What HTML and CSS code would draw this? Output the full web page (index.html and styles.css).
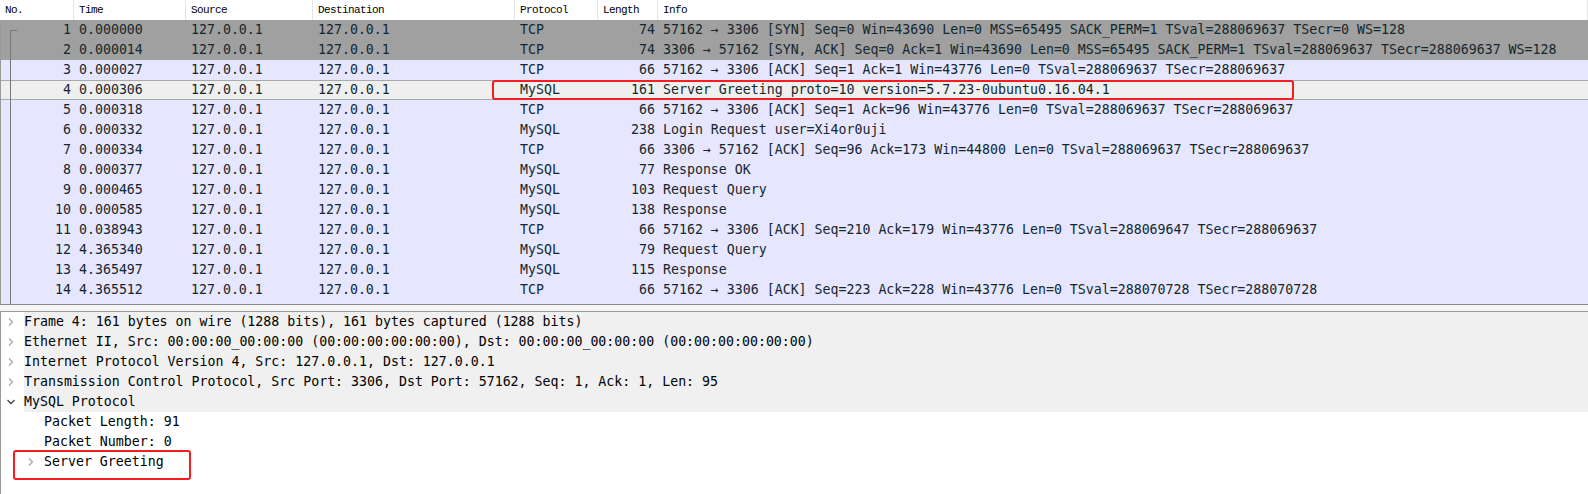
FILE: index.html
```html
<!DOCTYPE html>
<html>
<head>
<meta charset="utf-8">
<link rel="stylesheet" href="styles.css">
</head>
<body>
<div class="app">
  <div class="plist">
    <div class="hdr">
      <div class="hc">No.</div>
      <div class="hc">Time</div>
      <div class="hc">Source</div>
      <div class="hc">Destination</div>
      <div class="hc">Protocol</div>
      <div class="hc">Length</div>
      <div class="hc">Info</div>
    </div>
    <div class="rows">
      <div class="row syn"><span class="no">1</span><span>0.000000</span><span>127.0.0.1</span><span>127.0.0.1</span><span>TCP</span><span class="len">74</span><span>57162 → 3306 [SYN] Seq=0 Win=43690 Len=0 MSS=65495 SACK_PERM=1 TSval=288069637 TSecr=0 WS=128</span></div>
      <div class="row syn"><span class="no">2</span><span>0.000014</span><span>127.0.0.1</span><span>127.0.0.1</span><span>TCP</span><span class="len">74</span><span>3306 → 57162 [SYN, ACK] Seq=0 Ack=1 Win=43690 Len=0 MSS=65495 SACK_PERM=1 TSval=288069637 TSecr=288069637 WS=128</span></div>
      <div class="row tcp"><span class="no">3</span><span>0.000027</span><span>127.0.0.1</span><span>127.0.0.1</span><span>TCP</span><span class="len">66</span><span>57162 → 3306 [ACK] Seq=1 Ack=1 Win=43776 Len=0 TSval=288069637 TSecr=288069637</span></div>
      <div class="row sel"><span class="no">4</span><span>0.000306</span><span>127.0.0.1</span><span>127.0.0.1</span><span>MySQL</span><span class="len">161</span><span>Server Greeting proto=10 version=5.7.23-0ubuntu0.16.04.1</span></div>
      <div class="row tcp"><span class="no">5</span><span>0.000318</span><span>127.0.0.1</span><span>127.0.0.1</span><span>TCP</span><span class="len">66</span><span>57162 → 3306 [ACK] Seq=1 Ack=96 Win=43776 Len=0 TSval=288069637 TSecr=288069637</span></div>
      <div class="row tcp"><span class="no">6</span><span>0.000332</span><span>127.0.0.1</span><span>127.0.0.1</span><span>MySQL</span><span class="len">238</span><span>Login Request user=Xi4or0uji</span></div>
      <div class="row tcp"><span class="no">7</span><span>0.000334</span><span>127.0.0.1</span><span>127.0.0.1</span><span>TCP</span><span class="len">66</span><span>3306 → 57162 [ACK] Seq=96 Ack=173 Win=44800 Len=0 TSval=288069637 TSecr=288069637</span></div>
      <div class="row tcp"><span class="no">8</span><span>0.000377</span><span>127.0.0.1</span><span>127.0.0.1</span><span>MySQL</span><span class="len">77</span><span>Response OK</span></div>
      <div class="row tcp"><span class="no">9</span><span>0.000465</span><span>127.0.0.1</span><span>127.0.0.1</span><span>MySQL</span><span class="len">103</span><span>Request Query</span></div>
      <div class="row tcp"><span class="no">10</span><span>0.000585</span><span>127.0.0.1</span><span>127.0.0.1</span><span>MySQL</span><span class="len">138</span><span>Response</span></div>
      <div class="row tcp"><span class="no">11</span><span>0.038943</span><span>127.0.0.1</span><span>127.0.0.1</span><span>TCP</span><span class="len">66</span><span>57162 → 3306 [ACK] Seq=210 Ack=179 Win=43776 Len=0 TSval=288069647 TSecr=288069637</span></div>
      <div class="row tcp"><span class="no">12</span><span>4.365340</span><span>127.0.0.1</span><span>127.0.0.1</span><span>MySQL</span><span class="len">79</span><span>Request Query</span></div>
      <div class="row tcp"><span class="no">13</span><span>4.365497</span><span>127.0.0.1</span><span>127.0.0.1</span><span>MySQL</span><span class="len">115</span><span>Response</span></div>
      <div class="row tcp"><span class="no">14</span><span>4.365512</span><span>127.0.0.1</span><span>127.0.0.1</span><span>TCP</span><span class="len">66</span><span>57162 → 3306 [ACK] Seq=223 Ack=228 Win=43776 Len=0 TSval=288070728 TSecr=288070728</span></div>
      <div class="row tcp"><span class="no">15</span><span>8.256483</span><span>127.0.0.1</span><span>127.0.0.1</span><span>MySQL</span><span class="len">83</span><span>Request Query</span></div>
    </div>
    <div class="bracket"></div>
    <div class="redbox rb1"></div>
  </div>
  <div class="splitter"></div>
  <div class="tree">
    <div class="node top"><span class="arr"><svg width="8" height="10" viewBox="0 0 8 10"><path d="M2 1.5 L5.5 5 L2 8.5" fill="none" stroke="#a8a8a8" stroke-width="1.3"/></svg></span><span class="lbl">Frame 4: 161 bytes on wire (1288 bits), 161 bytes captured (1288 bits)</span></div>
    <div class="node top"><span class="arr"><svg width="8" height="10" viewBox="0 0 8 10"><path d="M2 1.5 L5.5 5 L2 8.5" fill="none" stroke="#a8a8a8" stroke-width="1.3"/></svg></span><span class="lbl">Ethernet II, Src: 00:00:00_00:00:00 (00:00:00:00:00:00), Dst: 00:00:00_00:00:00 (00:00:00:00:00:00)</span></div>
    <div class="node top"><span class="arr"><svg width="8" height="10" viewBox="0 0 8 10"><path d="M2 1.5 L5.5 5 L2 8.5" fill="none" stroke="#a8a8a8" stroke-width="1.3"/></svg></span><span class="lbl">Internet Protocol Version 4, Src: 127.0.0.1, Dst: 127.0.0.1</span></div>
    <div class="node top"><span class="arr"><svg width="8" height="10" viewBox="0 0 8 10"><path d="M2 1.5 L5.5 5 L2 8.5" fill="none" stroke="#a8a8a8" stroke-width="1.3"/></svg></span><span class="lbl">Transmission Control Protocol, Src Port: 3306, Dst Port: 57162, Seq: 1, Ack: 1, Len: 95</span></div>
    <div class="node top"><span class="arr"><svg width="10" height="8" viewBox="0 0 10 8"><path d="M1.5 2 L5 5.5 L8.5 2" fill="none" stroke="#404040" stroke-width="1.3"/></svg></span><span class="lbl">MySQL Protocol</span></div>
    <div class="node sub"><span class="arr"></span><span class="lbl">Packet Length: 91</span></div>
    <div class="node sub"><span class="arr"></span><span class="lbl">Packet Number: 0</span></div>
    <div class="node sub"><span class="arr"><svg width="8" height="10" viewBox="0 0 8 10"><path d="M2 1.5 L5.5 5 L2 8.5" fill="none" stroke="#a8a8a8" stroke-width="1.3"/></svg></span><span class="lbl">Server Greeting</span></div>
    <div class="redbox rb2"></div>
  </div>
</div>
</body>
</html>
```

FILE: styles.css
```css
* { box-sizing: border-box; }
html, body { margin: 0; padding: 0; background: #ffffff; }
.app { width: 1588px; height: 494px; overflow: hidden; display: flex; flex-direction: column; }

.plist { position: relative; height: 305px; border-bottom: 1px solid #8c8c8c; flex: none; }
.hdr {
  display: grid;
  grid-template-columns: 74px 112px 127px 202px 83px 60px 1fr;
  height: 20px;
  background: #ffffff;
}
.hc {
  font-family: "Liberation Mono", "DejaVu Sans Mono", monospace;
  font-size: 11px;
  letter-spacing: -0.6px;
  line-height: 20px;
  padding-left: 5px;
  color: #000;
  border-right: 1px solid #e5e5e5;
}
.rows { height: 284px; overflow: hidden; border-left: 1px solid #9a9a9a; }
.row {
  display: grid;
  grid-template-columns: 73px 112px 127px 202px 83px 60px 1fr;
  height: 20px;
  font-family: "DejaVu Sans Mono", monospace;
  font-size: 13.25px;
  line-height: 20px;
  color: #12272e;
  white-space: nowrap;
}
.row span { padding-left: 5px; overflow: hidden; }
.row span.no, .row span.len { text-align: right; padding-left: 0; padding-right: 3px; }
.row.syn { background: #a0a0a0; }
.row.tcp { background: #e7e6ff; }
.row.sel { background: #efefef; border-top: 1px solid #a9a9a9; border-bottom: 1px solid #a9a9a9; line-height: 18px; }

.bracket {
  position: absolute; left: 10px; top: 30px; width: 7px; height: 274px;
  border-left: 1px solid #6e7a7e; border-top: 1px solid #6e7a7e;
}
.redbox { position: absolute; border: 2px solid #f51d1d; border-radius: 3px; }
.rb1 { left: 492px; top: 80px; width: 802px; height: 20px; }
.rb2 { left: 12px; top: 138px; width: 178px; height: 30px; }

.splitter { height: 6px; background: #f6f6f6; flex: none; }
.tree { position: relative; flex: 1; border-top: 1px solid #9a9a9a; border-left: 1px solid #9a9a9a; background: #fff; }
.node {
  display: flex; align-items: center; height: 20px;
  font-family: "DejaVu Sans Mono", monospace;
  font-size: 13.25px;
  color: #000;
  white-space: nowrap;
}
.node .arr { flex: none; width: 23px; height: 20px; display: flex; align-items: center; justify-content: center; padding-right: 4px; }
.node.top .lbl { flex: 1; background: #f0f0f0; height: 20px; line-height: 20px; }
.node.sub { padding-left: 20px; }
.node.sub .lbl { line-height: 20px; }
```
